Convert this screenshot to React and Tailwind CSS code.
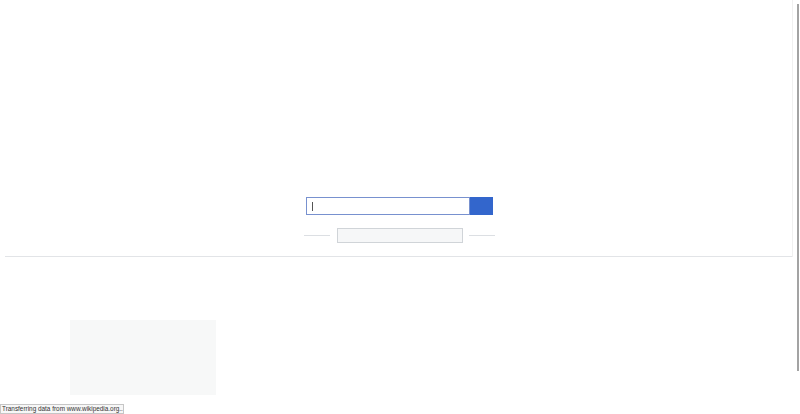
import React from 'react';

function SearchBox() {
  return (
    <div className="flex justify-center pt-[197px]">
      <div className="flex ml-[-1px]">
        <div className="w-[164px] h-[18px] border border-[#7891cf] bg-white flex items-center pl-[5px]">
          <span className="w-px h-[9px] bg-[#555]" />
        </div>
        <button className="w-[23px] h-[18px] bg-[#3366cc]" aria-label="Search" />
      </div>
    </div>
  );
}

function LanguageRow() {
  return (
    <div className="flex items-center justify-center mt-[13px] ml-[-1px]">
      <div className="w-[26px] h-px bg-[#dcdfe3]" />
      <div className="w-[126px] h-[15px] ml-[7px] mr-[6px] border border-[#d0d4d8] bg-[#f6f7f8]" />
      <div className="w-[26px] h-px bg-[#dcdfe3]" />
    </div>
  );
}

export default function App() {
  return (
    <div className="relative w-[800px] h-[414px] bg-white overflow-hidden font-['Liberation_Sans',sans-serif]">
      <SearchBox />
      <LanguageRow />
      <div className="mt-[13px] ml-[5px] w-[788px] h-px bg-[#e2e4e7]" />
      <div className="mt-[63px] ml-[70px] w-[146px] h-[75px] bg-[#f7f8f8]" />

      {/* page scrollbar */}
      <div className="absolute top-0 right-[7px] w-px h-[257px] bg-[#f0f0f0]" />
      <div className="absolute top-[4px] right-[1px] w-[2px] h-[367px] bg-[#a3a3a3]" />

      {/* loading status */}
      <div className="absolute left-0 bottom-0 h-[10px] w-[124px] pl-[1px] flex items-center border border-[#c6c6c6] bg-[#f7f7f7] text-[6.4px] leading-none text-[#333] whitespace-nowrap overflow-hidden">
        Transferring data from www.wikipedia.org...
      </div>
    </div>
  );
}
